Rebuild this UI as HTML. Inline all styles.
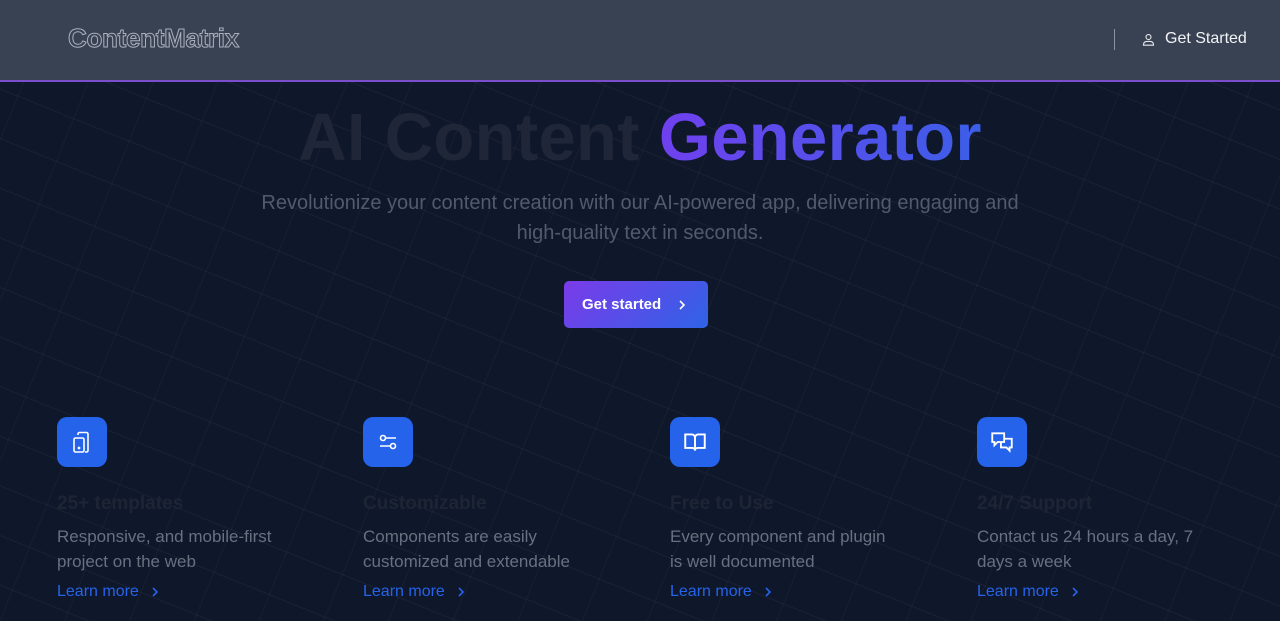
<!DOCTYPE html>
<html><head><meta charset="utf-8"><style>
*{margin:0;padding:0;box-sizing:border-box}
body{width:1280px;height:621px;overflow:hidden;background:#0f172a;font-family:"Liberation Sans",sans-serif;position:relative}
.grid{position:absolute;left:0;top:82px;width:1280px;height:539px;overflow:hidden}
.grid:before{content:"";position:absolute;left:-400px;top:-400px;width:2200px;height:1400px;transform:rotate(22deg);
background-image:linear-gradient(rgba(255,255,255,.045) 1px,transparent 1px),linear-gradient(90deg,rgba(255,255,255,.03) 1px,transparent 1px);background-size:60px 46px}
header{position:absolute;left:0;top:0;width:1280px;height:82px;background:#394253;border-bottom:2px solid #7c4dcc}
.logo{position:absolute;left:68px;top:23px;font-size:26px;font-weight:bold;color:transparent;-webkit-text-stroke:1px #aab1bd;letter-spacing:-0.3px}
.sep{position:absolute;left:1114px;top:29px;width:1px;height:21px;background:#8a93a2}
.gs{position:absolute;left:1141px;top:30px;color:#f1f3f6;font-size:16px;display:flex;align-items:center;gap:9px}
h1{position:absolute;top:102px;left:0;width:1280px;text-align:center;font-size:67px;font-weight:bold;color:#1e2637;letter-spacing:0.3px;line-height:72px}
h1 span{background:linear-gradient(90deg,#7040ee,#3c5ee8);-webkit-background-clip:text;color:transparent}
.sub{position:absolute;top:188px;left:200px;width:880px;text-align:center;font-size:20px;line-height:30px;color:#525b6b}
.btn{position:absolute;left:564px;top:281px;width:144px;height:47px;border-radius:5px;background:linear-gradient(135deg,#7b3be9,#2f63e8);color:#fff;font-size:15px;font-weight:bold;display:flex;align-items:center;padding-left:18px;gap:16px}
.f{position:absolute;top:417px;width:240px}
.ic{width:50px;height:50px;border-radius:10px;background:#2563eb;display:flex;align-items:center;justify-content:center}
.f h3{margin-top:26px;font-size:19px;color:#1d2535;font-weight:bold}
.f p{margin-top:9px;font-size:17px;line-height:25px;color:#687180}
.f a{display:flex;align-items:center;gap:12px;margin-top:9px;font-size:16px;color:#2563eb;text-decoration:none}
</style></head><body>
<div class="grid"></div>
<header><div class="logo">ContentMatrix</div><div class="sep"></div>
<div class="gs"><svg width="15" height="15" viewBox="0 0 24 24" fill="none" stroke="#e5e7eb" stroke-width="1.8"><circle cx="12" cy="8" r="4"/><path d="M4 21v-1a5 5 0 0 1 5-5h6a5 5 0 0 1 5 5v1z"/></svg>Get Started</div></header>
<h1>AI Content <span>Generator</span></h1>
<div class="sub">Revolutionize your content creation with our AI-powered app, delivering engaging and<br>high-quality text in seconds.</div>
<div class="btn">Get started <svg width="10" height="12" viewBox="0 0 10 12" fill="none" stroke="#fff" stroke-width="1.6"><path d="M3 2l4 4-4 4"/></svg></div>

<div class="f" style="left:57px"><div class="ic"><svg width="24" height="24" viewBox="0 0 24 24" fill="none" stroke="#fff" stroke-width="1.6"><rect x="4" y="8" width="10" height="14" rx="1.5"/><path d="M8 5V4a1.5 1.5 0 0 1 1.5-1.5h7A1.5 1.5 0 0 1 18 4v16.5a1.5 1.5 0 0 1-1.5 1.5H15"/><circle cx="9" cy="18" r=".6" fill="#fff"/></svg></div>
<h3>25+ templates</h3><p>Responsive, and mobile-first<br>project on the web</p><a>Learn more <svg width="8" height="12" viewBox="0 0 8 12" fill="none" stroke="#2563eb" stroke-width="1.6"><path d="M2 2l4 4-4 4"/></svg></a></div>

<div class="f" style="left:363px"><div class="ic"><svg width="24" height="24" viewBox="0 0 24 24" fill="none" stroke="#fff" stroke-width="1.6"><circle cx="7" cy="8" r="2.5"/><path d="M9.5 8H20M4 16h10.5"/><circle cx="17" cy="16" r="2.5"/></svg></div>
<h3>Customizable</h3><p>Components are easily<br>customized and extendable</p><a>Learn more <svg width="8" height="12" viewBox="0 0 8 12" fill="none" stroke="#2563eb" stroke-width="1.6"><path d="M2 2l4 4-4 4"/></svg></a></div>

<div class="f" style="left:670px"><div class="ic"><svg width="26" height="26" viewBox="0 0 24 24" fill="none" stroke="#fff" stroke-width="1.8"><path d="M3 5h6a3 3 0 0 1 3 3v12a2.5 2.5 0 0 0-2.5-2.5H3zM21 5h-6a3 3 0 0 0-3 3v12a2.5 2.5 0 0 1 2.5-2.5H21z"/></svg></div>
<h3>Free to Use</h3><p>Every component and plugin<br>is well documented</p><a>Learn more <svg width="8" height="12" viewBox="0 0 8 12" fill="none" stroke="#2563eb" stroke-width="1.6"><path d="M2 2l4 4-4 4"/></svg></a></div>

<div class="f" style="left:977px"><div class="ic"><svg width="26" height="26" viewBox="0 0 24 24" fill="none" stroke="#fff" stroke-width="1.7"><path d="M3 4h11v8H8l-3 3v-3H3z"/><path d="M14 9h7v8h-2v3l-3-3h-5v-5"/></svg></div>
<h3>24/7 Support</h3><p>Contact us 24 hours a day, 7<br>days a week</p><a>Learn more <svg width="8" height="12" viewBox="0 0 8 12" fill="none" stroke="#2563eb" stroke-width="1.6"><path d="M2 2l4 4-4 4"/></svg></a></div>
</body></html>
